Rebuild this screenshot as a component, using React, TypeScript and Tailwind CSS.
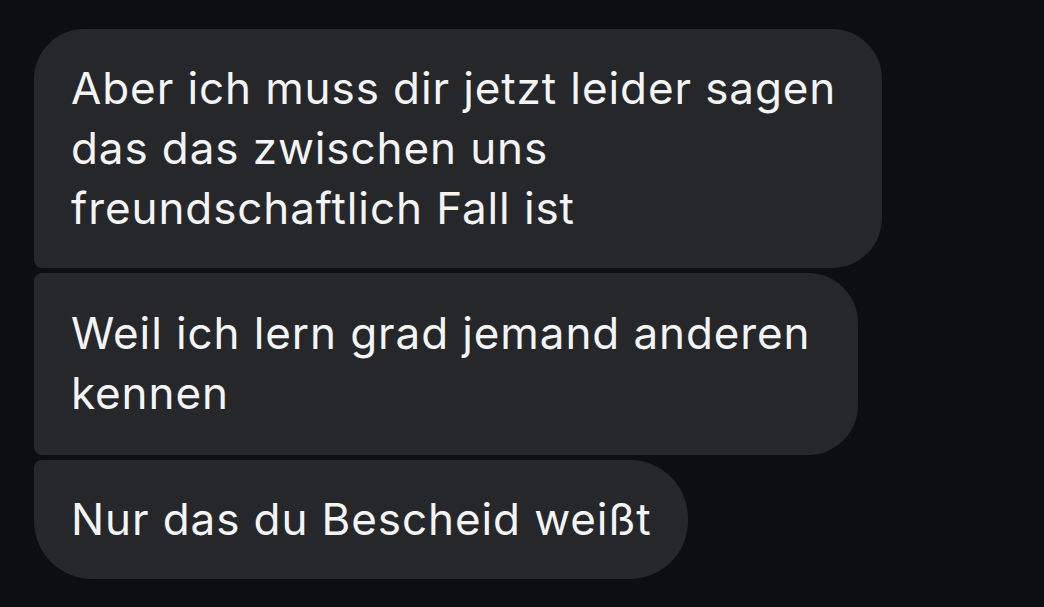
export default function App() {
    const messages = [
        {
            lines: ["Aber ich muss dir jetzt leider sagen", "das das zwischen uns", "freundschaftlich Fall ist"],
            width: "w-[848px]",
            shape: "rounded-[50px] rounded-bl-[8px] pt-[29px] pb-[30px]",
        },
        {
            lines: ["Weil ich lern grad jemand anderen", "kennen"],
            width: "w-[824px]",
            shape: "rounded-[50px] rounded-tl-[8px] rounded-bl-[8px] pt-[30px] pb-[32px]",
        },
        {
            lines: ["Nur das du Bescheid weißt"],
            width: "w-[654px]",
            shape: "rounded-[58px] rounded-tl-[8px] pt-[29px] pb-[30px]",
        },
    ];

    return (
        <div className="w-[1044px] h-[607px] bg-[#0c0e12] overflow-hidden pt-[29px] pl-[34px]">
            <div className="flex flex-col items-start gap-[5px]">
                {messages.map((message, index) => (
                    <div
                        key={index}
                        className={`${message.width} ${message.shape} bg-[#25272b] pl-[37px] text-[#f4f4f5] text-[44px] leading-[60px] tracking-[0.9px] font-['Inter','Liberation_Sans',sans-serif]`}
                    >
                        {message.lines.map((line, i) => (
                            <div key={i} className="whitespace-nowrap">
                                {line}
                            </div>
                        ))}
                    </div>
                ))}
            </div>
        </div>
    );
}
